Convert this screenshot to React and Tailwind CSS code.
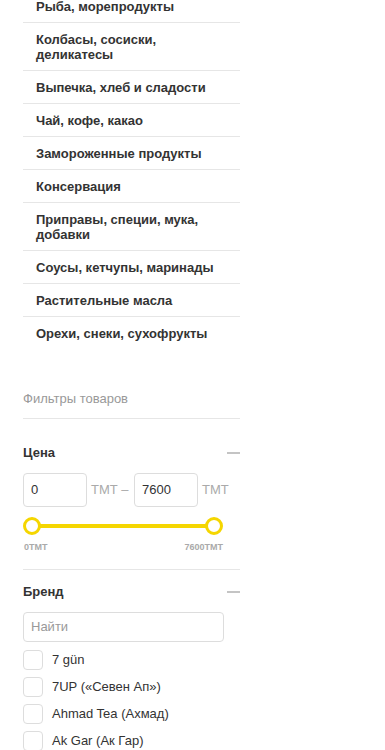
import React from "react";

const categories = [
  "Рыба, морепродукты",
  "Колбасы, сосиски, деликатесы",
  "Выпечка, хлеб и сладости",
  "Чай, кофе, какао",
  "Замороженные продукты",
  "Консервация",
  "Приправы, специи, мука, добавки",
  "Соусы, кетчупы, маринады",
  "Растительные масла",
  "Орехи, снеки, сухофрукты",
];

const brands = ["7 gün", "7UP («Севен Ап»)", "Ahmad Tea (Ахмад)", "Ak Gar (Ак Гар)"];

function Minus() {
  return <span className="block w-[13px] h-[2px] bg-[#c4c4c4]" />;
}

export default function App() {
  return (
    <div className="w-[385px] h-[750px] overflow-hidden bg-white font-['Liberation_Sans',Arial,sans-serif]">
      <div className="w-[217px] ml-[23px]">
        {/* категории */}
        <ul className="-mt-[10px]">
          {categories.map((c, i) => (
            <li
              key={c}
              className={
                "pl-[13px] pr-[20px] pt-[9px] pb-[8px] text-[13px] leading-[15px] font-bold text-[#333] " +
                (i < categories.length - 1 ? "border-b border-[#e6e6e6]" : "")
              }
            >
              {c}
            </li>
          ))}
        </ul>

        {/* фильтры */}
        <div className="mt-[42px] pb-[12px] border-b border-[#e6e6e6] text-[13px] leading-[15px] text-[#999]">
          Фильтры товаров
        </div>

        <div className="pt-[26px] pb-[17px] border-b border-[#e6e6e6]">
          <div className="flex items-center justify-between">
            <span className="text-[13px] leading-[15px] font-bold text-[#333]">Цена</span>
            <Minus />
          </div>
          <div className="flex items-center mt-[13px] text-[13px] text-[#aaa]">
            <div className="w-[64px] h-[34px] border border-[#ddd] rounded-[4px] flex items-center px-[7px] text-[#333]">
              0
            </div>
            <span className="ml-[4px] w-[43px]">ТМТ –</span>
            <div className="w-[64px] h-[34px] border border-[#ddd] rounded-[4px] flex items-center px-[7px] text-[#333]">
              7600
            </div>
            <span className="ml-[4px]">ТМТ</span>
          </div>
          <div className="w-[200px] mt-[10px]">
            <div className="relative h-[18px] flex items-center">
              <div className="mx-[9px] h-[4px] flex-1 bg-[#f5d600]" />
              <span className="absolute left-0 top-0 w-[18px] h-[18px] rounded-full border-[3px] border-[#f5d600] bg-white" />
              <span className="absolute right-0 top-0 w-[18px] h-[18px] rounded-full border-[3px] border-[#f5d600] bg-white" />
            </div>
            <div className="flex justify-between mt-[7px] text-[9px] leading-[10px] font-bold text-[#aaa]">
              <span className="ml-[1px]">0ТМТ</span>
              <span>7600ТМТ</span>
            </div>
          </div>
        </div>

        <div className="pt-[14px]">
          <div className="flex items-center justify-between">
            <span className="text-[13px] leading-[15px] font-bold text-[#333]">Бренд</span>
            <Minus />
          </div>
          <div className="w-[201px] h-[30px] mt-[13px] border border-[#ddd] rounded-[4px] flex items-center px-[7px] text-[13px] text-[#999]">
            Найти
          </div>
          <ul className="mt-[8px] flex flex-col gap-[7px]">
            {brands.map((b) => (
              <li key={b} className="flex items-center gap-[9px]">
                <span className="w-[20px] h-[20px] border border-[#ddd] rounded-[4px]" />
                <span className="text-[13px] text-[#333]">{b}</span>
              </li>
            ))}
          </ul>
        </div>
      </div>
    </div>
  );
}
